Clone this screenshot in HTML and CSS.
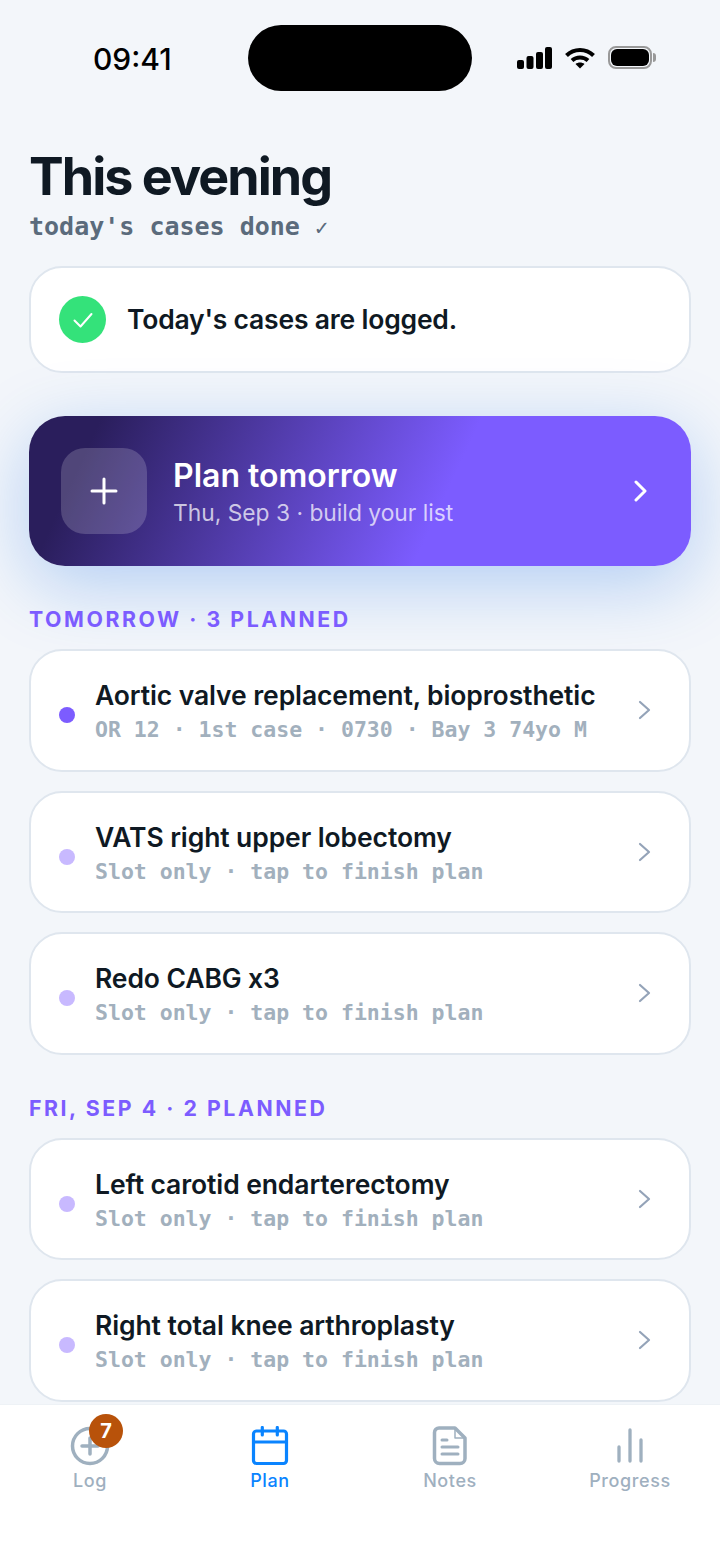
FILE: index.html
```html
<!DOCTYPE html>
<html lang="en">
<head>
  <meta charset="UTF-8">
  <meta name="viewport" content="width=device-width, initial-scale=1.0">
  <title>Plan</title>
  <link rel="stylesheet" href="styles.css">
</head>
<body>
  <div class="phone">
    <div class="status-bar">
      <span class="clock">09:41</span>
      <div class="island"></div>
      <div class="status-icons">
        <svg width="35" height="22" viewBox="0 0 35 22" fill="#000">
          <rect x="0" y="13" width="7" height="9" rx="2"/>
          <rect x="9.500" y="9" width="7" height="13" rx="2"/>
          <rect x="19" y="5" width="7" height="17" rx="2"/>
          <rect x="28" y="0" width="7" height="22" rx="2"/>
        </svg>
        <svg width="30" height="22" viewBox="0 0 30 22" fill="none" stroke="#000" stroke-width="4">
          <path d="M1.500 8.500C9 1 21 1 28.500 8.500"/>
          <path d="M7 13.500C11.500 9.500 18.500 9.500 23 13.500"/>
          <path d="M15 21.500L10.500 17C13 15 17 15 19.500 17Z" fill="#000" stroke="none"/>
        </svg>
        <div class="battery"><div class="battery-fill"></div></div>
      </div>
    </div>

    <main class="content">
      <h1 class="title">This evening</h1>
      <p class="subtitle">today's cases done <span class="tick">✓</span></p>

      <div class="card done-card">
        <span class="done-icon">
          <svg width="24" height="24" viewBox="0 0 24 24" fill="none" stroke="#fff" stroke-width="2" stroke-linecap="round" stroke-linejoin="round"><path d="M3.500 12.500L9.500 18.500L20.500 6"/></svg>
        </span>
        <span class="done-text">Today's cases are logged.</span>
      </div>

      <div class="hero">
        <span class="hero-icon">
          <svg width="30" height="30" viewBox="0 0 30 30" fill="none" stroke="#fff" stroke-width="3" stroke-linecap="round"><path d="M15 3V27M3 15H27"/></svg>
        </span>
        <div class="hero-text">
          <div class="hero-title">Plan tomorrow</div>
          <div class="hero-sub">Thu, Sep 3 · build your list</div>
        </div>
        <svg class="hero-chevron" width="14" height="22" viewBox="0 0 14 22" fill="none" stroke="#fff" stroke-width="3" stroke-linecap="round" stroke-linejoin="round"><path d="M2 2L11 11L2 20"/></svg>
      </div>

      <div class="section-label">TOMORROW · 3 PLANNED</div>
      <div class="rows">
        <div class="card row">
          <span class="dot dot-on"></span>
          <div class="row-text">
            <div class="row-title">Aortic valve replacement, bioprosthetic</div>
            <div class="row-sub">OR 12 · 1st case · 0730 · Bay 3 74yo M</div>
          </div>
          <svg class="chevron" width="13" height="20" viewBox="0 0 13 20" fill="none" stroke="#94a3b8" stroke-width="2.200" stroke-linecap="round" stroke-linejoin="round"><path d="M2 2L11 10L2 18"/></svg>
        </div>
        <div class="card row">
          <span class="dot"></span>
          <div class="row-text">
            <div class="row-title">VATS right upper lobectomy</div>
            <div class="row-sub">Slot only · tap to finish plan</div>
          </div>
          <svg class="chevron" width="13" height="20" viewBox="0 0 13 20" fill="none" stroke="#94a3b8" stroke-width="2.200" stroke-linecap="round" stroke-linejoin="round"><path d="M2 2L11 10L2 18"/></svg>
        </div>
        <div class="card row">
          <span class="dot"></span>
          <div class="row-text">
            <div class="row-title">Redo CABG x3</div>
            <div class="row-sub">Slot only · tap to finish plan</div>
          </div>
          <svg class="chevron" width="13" height="20" viewBox="0 0 13 20" fill="none" stroke="#94a3b8" stroke-width="2.200" stroke-linecap="round" stroke-linejoin="round"><path d="M2 2L11 10L2 18"/></svg>
        </div>
      </div>

      <div class="section-label">FRI, SEP 4 · 2 PLANNED</div>
      <div class="rows">
        <div class="card row">
          <span class="dot"></span>
          <div class="row-text">
            <div class="row-title">Left carotid endarterectomy</div>
            <div class="row-sub">Slot only · tap to finish plan</div>
          </div>
          <svg class="chevron" width="13" height="20" viewBox="0 0 13 20" fill="none" stroke="#94a3b8" stroke-width="2.200" stroke-linecap="round" stroke-linejoin="round"><path d="M2 2L11 10L2 18"/></svg>
        </div>
        <div class="card row">
          <span class="dot"></span>
          <div class="row-text">
            <div class="row-title">Right total knee arthroplasty</div>
            <div class="row-sub">Slot only · tap to finish plan</div>
          </div>
          <svg class="chevron" width="13" height="20" viewBox="0 0 13 20" fill="none" stroke="#94a3b8" stroke-width="2.200" stroke-linecap="round" stroke-linejoin="round"><path d="M2 2L11 10L2 18"/></svg>
        </div>
      </div>
    </main>

    <nav class="tab-bar">
      <div class="tab">
        <span class="tab-icon">
          <svg width="40" height="40" viewBox="0 0 40 40" fill="none" stroke="#9fb0bf" stroke-width="3.500" stroke-linecap="round"><circle cx="20" cy="20" r="17.500"/><path d="M20 12V28M12 20H28"/></svg>
          <span class="badge">7</span>
        </span>
        <span class="tab-label">Log</span>
      </div>
      <div class="tab tab-active">
        <span class="tab-icon">
          <svg width="40" height="40" viewBox="0 0 40 40" fill="none" stroke="#0a84ff" stroke-width="3.200" stroke-linecap="round" stroke-linejoin="round"><rect x="3.500" y="5" width="33" height="32.500" rx="3"/><path d="M3.500 16H36.500M12.300 1.500V9M27.300 1.500V9"/></svg>
        </span>
        <span class="tab-label">Plan</span>
      </div>
      <div class="tab">
        <span class="tab-icon">
          <svg width="40" height="40" viewBox="0 0 40 40" fill="none" stroke="#9fb0bf" stroke-width="3.500" stroke-linecap="round" stroke-linejoin="round"><path d="M9 2H25L35 12V32.500A5 5 0 0 1 30 37.500H9.500A5 5 0 0 1 4.500 32.500V6.500A4.500 4.500 0 0 1 9 2Z"/><path d="M25 3V12H34" stroke-width="1.500"/><path d="M12 14H17M12 21H28M12 28H28" stroke-width="3"/></svg>
        </span>
        <span class="tab-label">Notes</span>
      </div>
      <div class="tab">
        <span class="tab-icon">
          <svg width="40" height="40" viewBox="0 0 40 40" fill="none" stroke="#9fb0bf" stroke-width="3.300" stroke-linecap="round"><path d="M9 21V35M20 4V35M31 14V35"/></svg>
        </span>
        <span class="tab-label">Progress</span>
      </div>
    </nav>
  </div>
</body>
</html>
```
FILE: styles.css
```css
* {
  box-sizing: border-box;
}

body {
  margin: 0;
  background: #f3f6fa;
  font-family: 'Inter', 'Liberation Sans', sans-serif;
  color: #0f1923;
}

.phone {
  width: 720px;
  height: 1565px;
  display: flex;
  flex-direction: column;
  overflow: hidden;
  background: #f3f6fa;
}

/* status bar */
.status-bar {
  flex: none;
  height: 91px;
  padding: 25px 0 0 93px;
  display: flex;
  align-items: flex-start;
}

.clock {
  width: 80px;
  margin-top: 17px;
  font-size: 30px;
  line-height: 34px;
  font-weight: 500;
  color: #000;
}

.island {
  width: 224px;
  height: 66px;
  margin-left: 75px;
  border-radius: 33px;
  background: #000;
}

.status-icons {
  display: flex;
  align-items: center;
  gap: 13px;
  margin-top: 21px;
  margin-left: 45px;
}

.battery {
  position: relative;
  width: 44px;
  height: 23px;
  padding: 1px;
  border: 2px solid #999;
  border-radius: 8px;
}

.battery::after {
  content: "";
  position: absolute;
  right: -6px;
  top: 5px;
  width: 3px;
  height: 9px;
  border-radius: 0 3px 3px 0;
  background: #999;
}

.battery-fill {
  height: 100%;
  border-radius: 6px;
  background: #000;
}

/* main column */
.content {
  flex: 1;
  min-height: 0;
  overflow: hidden;
  padding: 57px 29px 0;
}

.title {
  margin: 0;
  font-size: 52px;
  line-height: 58px;
  font-weight: 700;
  letter-spacing: -1.950px;
  color: #0f1923;
}

.subtitle {
  margin: 6px 0 0;
  font-family: 'DejaVu Sans Mono', 'Liberation Mono', monospace;
  font-size: 25px;
  line-height: 30px;
  font-weight: 700;
  color: #5b6b7c;
}

.tick {
  font-weight: 400;
  font-size: 22px;
}

.card {
  background: #fff;
  border: 2px solid #dfe6ee;
  border-radius: 33px;
}

.done-card {
  height: 107px;
  margin-top: 23px;
  padding: 0 28px;
  display: flex;
  align-items: center;
  gap: 21px;
}

.done-icon {
  width: 47px;
  height: 47px;
  border-radius: 50%;
  background: #34e27a;
  display: flex;
  align-items: center;
  justify-content: center;
}

.done-text {
  margin-bottom: 2px;
  font-size: 26.500px;
  font-weight: 600;
  letter-spacing: -0.200px;
}

/* plan tomorrow card */
.hero {
  height: 150px;
  margin-top: 43px;
  padding: 0 43px 0 32px;
  display: flex;
  align-items: center;
  border-radius: 36px;
  background: linear-gradient(115deg, #2a1e5c 10%, #7c5cff 62%);
  box-shadow: 0 18px 72px rgba(10, 100, 230, 0.28);
}

.hero-icon {
  flex: none;
  width: 86px;
  height: 86px;
  border-radius: 24px;
  background: rgba(255, 255, 255, 0.18);
  display: flex;
  align-items: center;
  justify-content: center;
}

.hero-text {
  flex: 1;
  margin-left: 26px;
}

.hero-title {
  margin-top: 2px;
  font-size: 32px;
  line-height: 38px;
  font-weight: 600;
  color: #fff;
}

.hero-sub {
  margin-top: 3px;
  font-size: 22.800px;
  line-height: 30px;
  color: rgba(255, 255, 255, 0.72);
}

/* sections */
.section-label {
  margin-top: 40px;
  font-size: 21.300px;
  line-height: 26px;
  font-weight: 700;
  letter-spacing: 2.550px;
  color: #7c5cff;
}

.rows {
  margin-top: 17px;
  display: flex;
  flex-direction: column;
  gap: 19px;
}

.row {
  height: 122.500px;
  padding: 0 38px 0 28px;
  display: flex;
  align-items: center;
}

.dot {
  flex: none;
  width: 16px;
  height: 16px;
  margin-top: 10px;
  border-radius: 50%;
  background: #c8b9ff;
}

.dot-on {
  background: #7c5cff;
}

.row-text {
  flex: 1;
  margin-left: 20px;
  padding-top: 2px;
}

.row-title {
  font-size: 26.500px;
  line-height: 34px;
  font-weight: 600;
  letter-spacing: -0.100px;
}

.row-sub {
  margin-top: 4px;
  font-family: 'DejaVu Sans Mono', 'Liberation Mono', monospace;
  font-size: 21.500px;
  line-height: 28px;
  font-weight: 700;
  color: #a2b0bd;
}

.chevron {
  flex: none;
}

/* tab bar */
.tab-bar {
  flex: none;
  height: 161px;
  padding-top: 21px;
  display: flex;
  align-items: flex-start;
  background: #fff;
  border-top: 1px solid #eef2f6;
}

.tab {
  flex: 1;
  display: flex;
  flex-direction: column;
  align-items: center;
  gap: 2px;
}

.tab-icon {
  position: relative;
  width: 40px;
  height: 40px;
}

.tab-label {
  font-size: 18px;
  line-height: 26px;
  font-weight: 500;
  letter-spacing: 0.600px;
  color: #9fb0bf;
}

.tab-active .tab-label {
  color: #0a84ff;
}

.badge {
  position: absolute;
  top: -12px;
  right: -13px;
  width: 34px;
  height: 34px;
  border-radius: 50%;
  background: #b8520a;
  color: #fff;
  font-size: 20px;
  font-weight: 700;
  line-height: 34px;
  text-align: center;
}
```
